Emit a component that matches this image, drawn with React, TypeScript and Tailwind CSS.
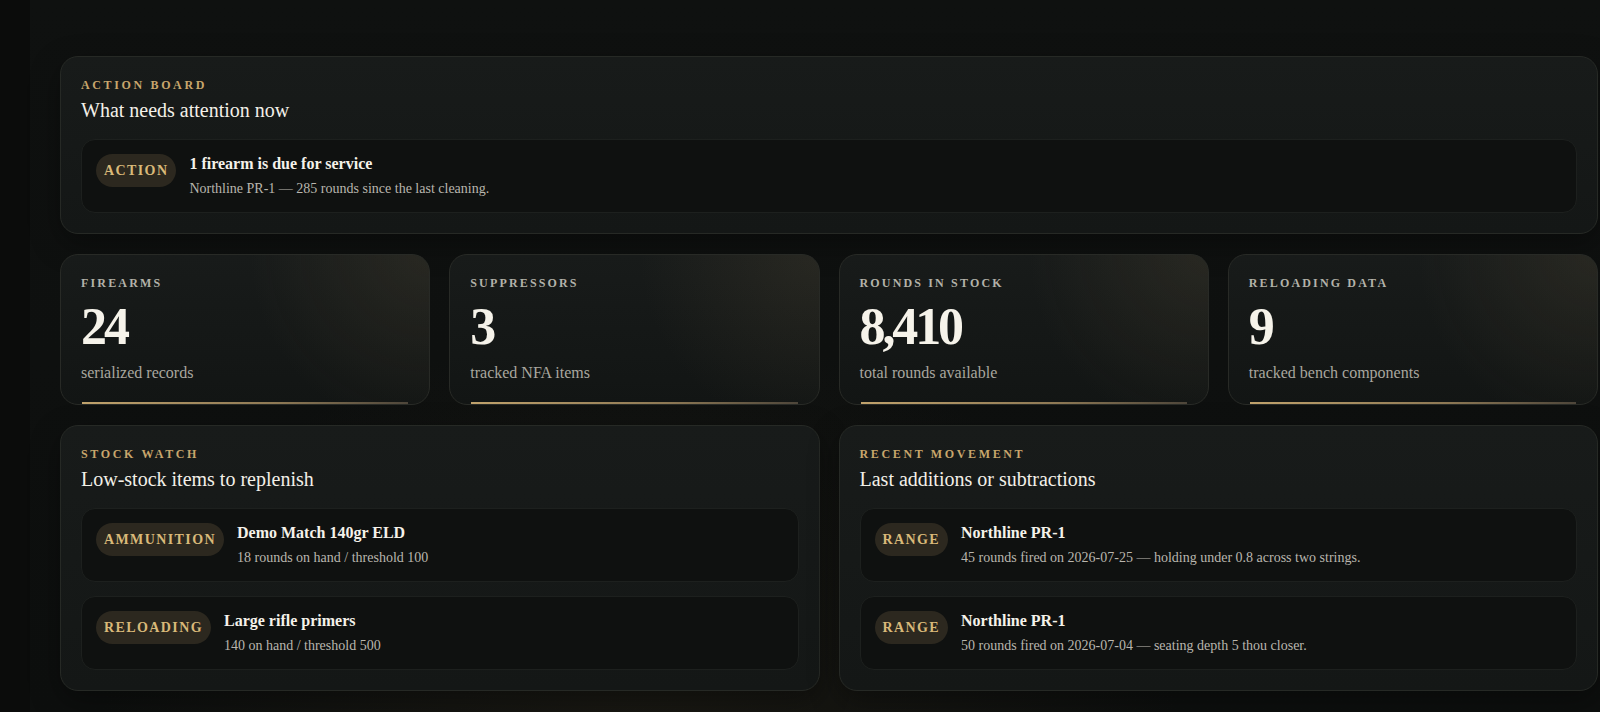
import React from "react";

const serif = { fontFamily: '"Liberation Serif", "DejaVu Serif", serif' };

const stats = [
  { label: "FIREARMS", value: "24", note: "serialized records" },
  { label: "SUPPRESSORS", value: "3", note: "tracked NFA items" },
  { label: "ROUNDS IN STOCK", value: "8,410", note: "total rounds available" },
  { label: "RELOADING DATA", value: "9", note: "tracked bench components" },
];

const lowStock = [
  { tag: "AMMUNITION", title: "Demo Match 140gr ELD", detail: "18 rounds on hand / threshold 100" },
  { tag: "RELOADING", title: "Large rifle primers", detail: "140 on hand / threshold 500" },
];

const movement = [
  {
    tag: "RANGE",
    title: "Northline PR-1",
    detail: "45 rounds fired on 2026-07-25 — holding under 0.8 across two strings.",
  },
  {
    tag: "RANGE",
    title: "Northline PR-1",
    detail: "50 rounds fired on 2026-07-04 — seating depth 5 thou closer.",
  },
];

const panel =
  "rounded-[18px] border border-[#262925] bg-[linear-gradient(180deg,#181b1a,#141716)] shadow-[0_10px_30px_rgba(0,0,0,0.35)]";

function Eyebrow({ children }: { children: React.ReactNode }) {
  return (
    <p className="text-[12px] font-bold leading-none tracking-[0.22em] text-[#c8a66c]">{children}</p>
  );
}

function Heading({ children }: { children: React.ReactNode }) {
  return <h2 className="mt-[6px] text-[20px] leading-[26px] text-[#f3f0e8]">{children}</h2>;
}

function Pill({ children }: { children: React.ReactNode }) {
  return (
    <span className="flex h-[33px] shrink-0 items-center rounded-full bg-[#2c281f] px-2 text-[14px] font-bold tracking-[0.1em] text-[#d9b979]">
      {children}
    </span>
  );
}

function ItemRow({ tag, title, detail }: { tag: string; title: string; detail: string }) {
  return (
    <div className="flex items-start gap-[13px] rounded-[14px] border border-[#1d201e] bg-[#0f1110] px-[14px] py-[14px]">
      <Pill>{tag}</Pill>
      <div>
        <p className="text-[16px] font-bold leading-5 text-[#f5f2ea]">{title}</p>
        <p className="mt-[6px] text-[14px] leading-[18px] text-[#b9b6ae]">{detail}</p>
      </div>
    </div>
  );
}

function StatCard({ label, value, note }: { label: string; value: string; note: string }) {
  return (
    <div className="relative h-[151px] overflow-hidden rounded-[18px] border border-[#282a26] bg-[radial-gradient(circle_at_100%_0%,rgba(105,92,66,0.2),transparent_45%),linear-gradient(180deg,#181b1a,#121514)] px-5 pt-[22px]">
      <p className="text-[12px] font-bold leading-none tracking-[0.18em] text-[#b3b2a9]">{label}</p>
      <p className="mt-[12px] text-[52px] font-bold leading-none tracking-[-0.06em] text-[#f6f3ea]">{value}</p>
      <p className="mt-[10px] text-[16px] leading-5 text-[#a9a79f]">{note}</p>
      <div className="absolute bottom-0 left-[21px] right-[21px] h-[2px] bg-[linear-gradient(90deg,#c0a26c,#8e7955_60%,#4e463a)]" />
    </div>
  );
}

export default function App() {
  return (
    <div
      className="flex min-h-screen bg-[radial-gradient(ellipse_at_40%_105%,rgba(70,58,36,0.22),transparent_40%),linear-gradient(180deg,#0f1110,#0d0f0e)]"
      style={serif}
    >
      <aside className="w-[30px] shrink-0 bg-[#0b0c0b]" />
      <main className="flex flex-1 flex-col gap-5 pb-6 pl-[30px] pr-[2px] pt-[56px]">
        <section className={`${panel} px-5 pb-5 pt-[22px]`}>
          <Eyebrow>ACTION BOARD</Eyebrow>
          <Heading>What needs attention now</Heading>
          <div className="mt-4">
            <ItemRow
              tag="ACTION"
              title="1 firearm is due for service"
              detail="Northline PR-1 — 285 rounds since the last cleaning."
            />
          </div>
        </section>

        <div className="grid grid-cols-4 gap-[19px]">
          {stats.map((s) => (
            <StatCard key={s.label} {...s} />
          ))}
        </div>

        <div className="grid grid-cols-2 gap-[19px]">
          <section className={`${panel} px-5 pb-5 pt-[22px]`}>
            <Eyebrow>STOCK WATCH</Eyebrow>
            <Heading>Low-stock items to replenish</Heading>
            <div className="mt-4 flex flex-col gap-[14px]">
              {lowStock.map((item) => (
                <ItemRow key={item.title} {...item} />
              ))}
            </div>
          </section>
          <section className={`${panel} px-5 pb-5 pt-[22px]`}>
            <Eyebrow>RECENT MOVEMENT</Eyebrow>
            <Heading>Last additions or subtractions</Heading>
            <div className="mt-4 flex flex-col gap-[14px]">
              {movement.map((item, index) => (
                <ItemRow key={`${item.title}-${index}`} {...item} />
              ))}
            </div>
          </section>
        </div>
      </main>
    </div>
  );
}
